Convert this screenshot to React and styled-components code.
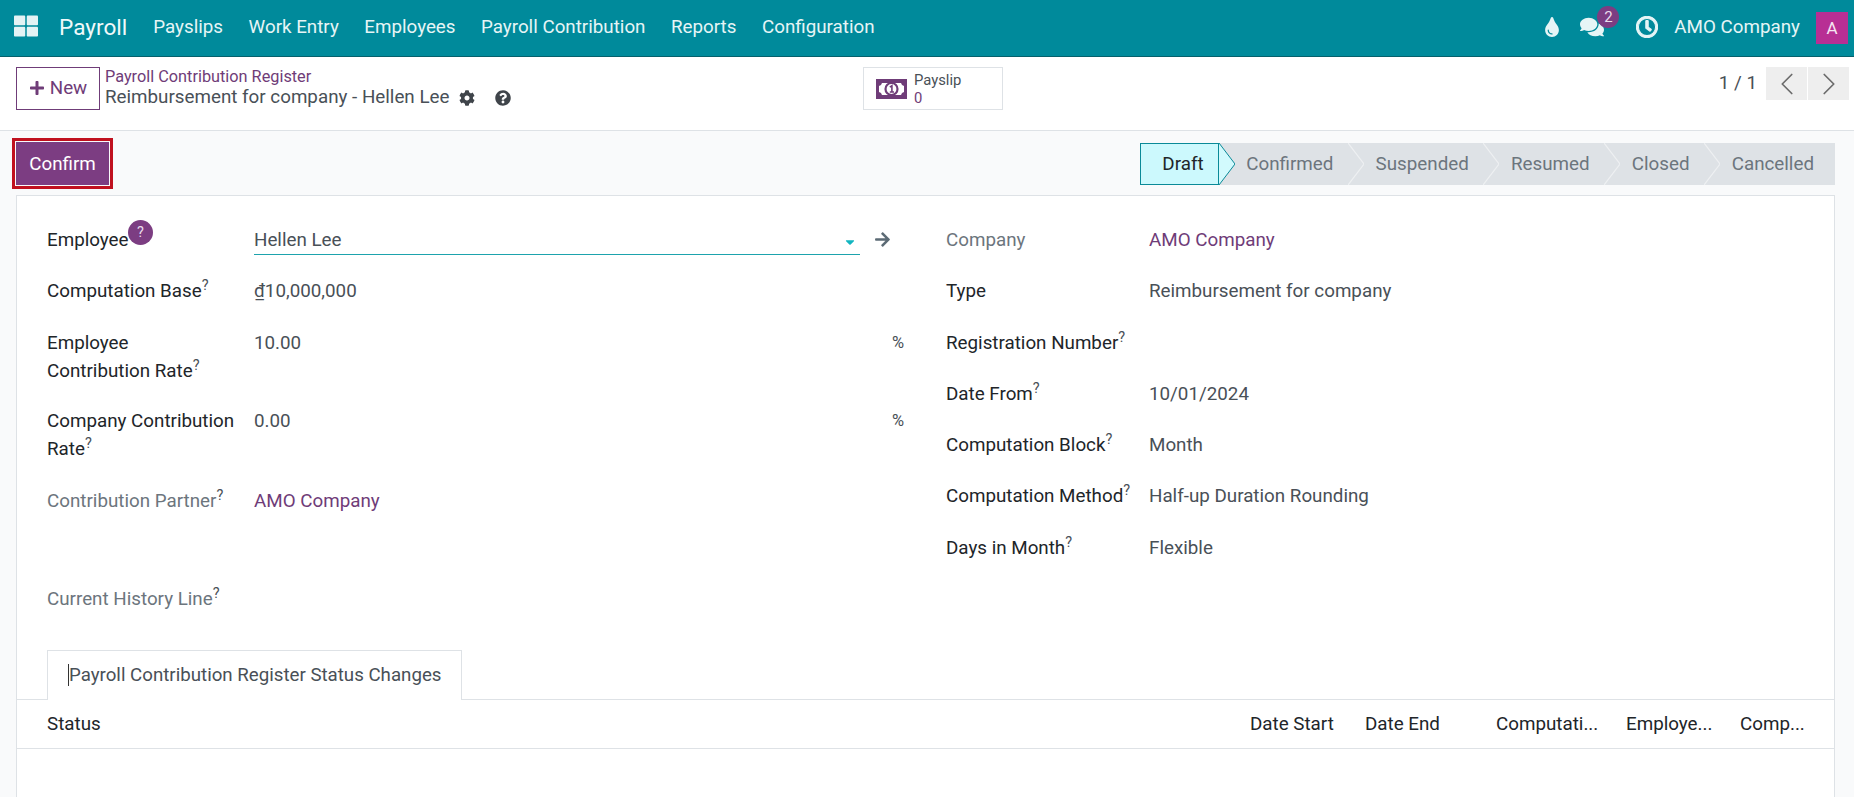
import React from "react";
import styled, { createGlobalStyle } from "styled-components";
import { FaThLarge, FaPlus, FaCog, FaQuestionCircle, FaTint, FaComments, FaRegClock, FaArrowRight, FaCaretDown } from "react-icons/fa";
import { LuChevronLeft, LuChevronRight } from "react-icons/lu";

const Global = createGlobalStyle`
  html, body { margin: 0; padding: 0; height: 100%; overflow: hidden; }
  body { font-family: Roboto, "Liberation Sans", sans-serif; font-size: 18.8px; color: #212529; background: #f9fafb; }
  * { box-sizing: border-box; }
`;
const purple = "#6f3c78";
const NavBar = styled.header`
  height: 57px; background: #008a9b; border-bottom: 1px solid #05606c; color: #e6f5f6;
  display: flex; align-items: center; padding: 0 6px 2px 14px;
`;
const AppIcon = styled.span`display: flex; font-size: 24px; margin-right: 21px; margin-top: -2px; color: #e4f3f5;`;
const Brand = styled.span`font-size: 22.6px; margin-right: 26px; color: #f0f9fa;`;
const NavLink = styled.span`margin-right: 25.5px; white-space: nowrap;`;
const NavSpacer = styled.div`flex: 1;`;
const NavIcon = styled.span`
  display: flex; position: relative; font-size: ${p => p.$size || 20}px; margin-right: ${p => p.$mr || 0}px;
`;
const Badge = styled.span`
  position: absolute; left: 17px; top: -9px; width: 22px; height: 22px; border-radius: 50%;
  background: #7c3d82; color: #e9dcec; font-size: 15px; display: flex; align-items: center; justify-content: center;
`;
const Avatar = styled.span`
  width: 32px; height: 32px; background: #b82f94; color: #f6e6f2; margin-left: 16px; margin-top: 2px;
  display: flex; align-items: center; justify-content: center; font-size: 17px;
`;
const ControlPanel = styled.div`
  height: 74px; background: #fff; border-bottom: 1px solid #dee2e6;
  display: grid; grid-template-columns: 847px 1fr auto; padding: 10px 5px 0 16px;
`;
const CpLeft = styled.div`display: flex; gap: 5px;`;
const NewButton = styled.button`
  height: 43px; width: 84px; border: 1px solid ${purple}; background: #fff; color: ${purple}; font: inherit;
  display: flex; align-items: center; justify-content: center; gap: 5px; padding: 0 0 2px;
`;
const Crumbs = styled.div`display: flex; flex-direction: column;`;
const CrumbLink = styled.span`color: ${purple}; font-size: 16.3px; line-height: 20px;`;
const CrumbTitle = styled.span`
  display: flex; align-items: center; color: #495057; font-size: 18.8px; line-height: 23px; margin-top: -1px;
`;
const TitleIcon = styled.span`display: flex; font-size: 16px; color: #3f444a; margin-left: ${p => p.$ml}px;`;
const StatButton = styled.div`
  width: 140px; height: 43px; border: 1px solid #dee2e6; background: #fff;
  display: flex; padding: 0 0 0 12px; gap: 7px; align-items: center;
`;
const MoneyIcon = styled.svg`width: 31px; height: 20px; flex: none;`;
const StatText = styled.div`display: flex; flex-direction: column; font-size: 14.8px; line-height: 18px; color: #495057;`;
const StatValue = styled.span`color: ${purple};`;
const Pager = styled.div`display: flex; align-items: flex-start; color: #495057;`;
const PagerText = styled.span`margin-right: 9px; line-height: 32px;`;
const PagerButton = styled.span`
  width: 41px; height: 33px; background: #eeeeee; color: #6c6c6c; margin-left: ${p => p.$ml || 0}px;
  display: flex; align-items: center; justify-content: center; font-size: 38px;
`;
const StatusRow = styled.div`
  height: 64px; display: flex; justify-content: space-between; align-items: flex-start; padding: 11px 19px 0 16px;
`;
const ConfirmButton = styled.button`
  width: 93px; height: 43px; background: #7c3d82; color: #fff; border: 0; font: inherit; padding: 0;
  outline: 3px solid #c0111f; outline-offset: 1px;
`;
const Steps = styled.div`display: flex; height: 42px; margin-top: 1px;`;
const Step = styled.div`
  position: relative; display: flex; align-items: center; white-space: nowrap;
  padding: ${p => p.$first ? "0 14px 0 21px" : p.$last ? "0 21px 0 27.7px" : "0 14.5px 0 27.7px"};
  background: ${p => p.$active ? "#ccf9fd" : "#dee2e6"};
  color: ${p => p.$active ? "#212529" : "#6c757d"};
  border: ${p => p.$active ? "1px solid #0a8a98" : "0"};
`;
const Chevron = styled.svg`position: absolute; left: 100%; top: ${p => p.$active ? "-1px" : 0}; width: 16px; height: 42px; z-index: 2; ${p => p.$active ? "margin-left: 1px;" : ""}`;
const Sheet = styled.main`
  margin: 0 19px 0 16px; height: 602px; background: #fff; border: 1px solid #dee2e6; border-bottom: 0; padding-top: 30px;
`;
const Columns = styled.div`display: grid; grid-template-columns: 899px 1fr; height: 424px;`;
const FormColumn = styled.div`display: flex; flex-direction: column; padding-left: ${p => p.$pl}px;`;
const Row = styled.div`
  display: grid; grid-template-columns: ${p => p.$labelw}px ${p => p.$valw ? p.$valw + "px auto" : "1fr"}; line-height: 28px; margin-bottom: ${p => p.$mb ?? 23.3}px;
`;
const Label = styled.div`color: ${p => p.$muted ? "#6c757d" : "#212529"}; position: relative;`;
const Sup = styled.sup`font-size: 14.5px; line-height: 0; color: #495057; vertical-align: 7px;`;
const HelpDot = styled.span`
  position: absolute; top: -6px; left: 81px; width: 25px; height: 25px; border-radius: 50%;
  background: #7c3d82; color: #e9dcec; font-size: 14.5px; line-height: 25px; text-align: center;
`;
const Value = styled.div`color: ${p => p.$link ? purple : "#495057"};`;
const ComboWrap = styled.div`display: flex; align-items: flex-start;`;
const Combo = styled.div`
  width: 606px; height: 29px; border-bottom: 1px solid #1da3ad; position: relative; color: #495057;
`;
const Caret = styled.span`position: absolute; right: 3px; top: 9px; display: flex; color: #12b5c0; font-size: 14px;`;
const GoArrow = styled.span`display: flex; margin: 5px 0 0 14px; color: #5c6b75; font-size: 17px;`;
const Unit = styled.div`color: #495057; padding-left: 0; font-size: 16.5px;`;
const Tabs = styled.div`
  height: 50px; border-bottom: 1px solid #dee2e6; padding-left: 30px; display: flex;
`;
const Tab = styled.div`
  height: 50px; width: 415px; border: 1px solid #dee2e6; border-bottom: 0; background: #fff; color: #495057; font-size: 18.7px;
  padding: 0 0 2px 20px; display: flex; align-items: center; position: relative;
`;
const TextCursor = styled.span`width: 1px; height: 22px; background: #333; margin-right: 0;`;
const TableHead = styled.div`
  height: 49px; border-bottom: 1px solid #dee2e6; display: grid; align-items: center; padding-left: 30px;
  grid-template-columns: 1203px 115px 131px 130px 114px auto;
`;
const HeadCell = styled.span`white-space: nowrap;`;

const Chev = ({ active }) => (
  <Chevron viewBox="0 0 16 42" $active={active} preserveAspectRatio="none">
    {active
      ? <path d="M0 0 L16 21 L0 42" fill="#d2fafd" stroke="#0a8a98" strokeWidth="1" />
      : <><path d="M0 0 L16 21 L0 42Z" fill="#dee2e6" /><path d="M0 0 L16 21 L0 42" fill="none" stroke="#eef0f2" strokeWidth="1.2" /></>}
  </Chevron>
);
const Help = () => <Sup>?</Sup>;
const Money = () => (
  <MoneyIcon viewBox="0 0 31 20">
    <rect width="31" height="20" fill={purple} />
    <path d="M6 4 H25 Q25.5 6.5 28 7 V13 Q25.5 13.5 25 16 H6 Q5.5 13.5 3 13 V7 Q5.5 6.5 6 4Z" fill="#fff" />
    <circle cx="15.5" cy="10" r="6" fill="#fff" stroke={purple} strokeWidth="2.2" />
    <path d="M13.8 8.2 L15.9 6.8 V13 M13.8 13 H18" fill="none" stroke={purple} strokeWidth="1.6" />
  </MoneyIcon>
);

const navItems = ["Payslips", "Work Entry", "Employees", "Payroll Contribution", "Reports", "Configuration"];
const steps = ["Draft", "Confirmed", "Suspended", "Resumed", "Closed", "Cancelled"];

export default function App() {
  return (
    <>
      <Global />
      <NavBar>
        <AppIcon><FaThLarge /></AppIcon>
        <Brand>Payroll</Brand>
        {navItems.map(n => <NavLink key={n}>{n}</NavLink>)}
        <NavSpacer />
        <NavIcon $size={20} $mr={18}><FaTint /></NavIcon>
        <NavIcon $size={24} $mr={32}><FaComments /><Badge>2</Badge></NavIcon>
        <NavIcon $size={22} $mr={16}><FaRegClock stroke="currentColor" strokeWidth={24} /></NavIcon>
        <span>AMO Company</span>
        <Avatar>A</Avatar>
      </NavBar>
      <ControlPanel>
        <CpLeft>
          <NewButton><FaPlus size={16} />New</NewButton>
          <Crumbs>
            <CrumbLink>Payroll Contribution Register</CrumbLink>
            <CrumbTitle>
              Reimbursement for company - Hellen Lee
              <TitleIcon $ml={10}><FaCog /></TitleIcon>
              <TitleIcon $ml={20}><FaQuestionCircle /></TitleIcon>
            </CrumbTitle>
          </Crumbs>
        </CpLeft>
        <StatButton>
          <Money />
          <StatText>Payslip<StatValue>0</StatValue></StatText>
        </StatButton>
        <Pager>
          <PagerText>1 / 1</PagerText>
          <PagerButton><LuChevronLeft strokeWidth={1.1} /></PagerButton>
          <PagerButton $ml={1}><LuChevronRight strokeWidth={1.1} /></PagerButton>
        </Pager>
      </ControlPanel>
      <StatusRow>
        <ConfirmButton>Confirm</ConfirmButton>
        <Steps>
          {steps.map((s, i) => (
            <Step key={s} $first={i === 0} $last={i === steps.length - 1} $active={i === 0}>
              {s}
              {i < steps.length - 1 && <Chev active={i === 0} />}
            </Step>
          ))}
        </Steps>
      </StatusRow>
      <Sheet>
        <Columns>
          <FormColumn $pl={30}>
            <Row $labelw={207} $mb={22}>
              <Label>Employee<HelpDot>?</HelpDot></Label>
              <ComboWrap>
                <Combo>Hellen Lee<Caret><FaCaretDown /></Caret></Combo>
                <GoArrow><FaArrowRight /></GoArrow>
              </ComboWrap>
            </Row>
            <Row $labelw={207} $mb={24.3}><Label>Computation Base<Help /></Label><Value>₫10,000,000</Value></Row>
            <Row $labelw={207} $valw={638} $mb={22}><Label>Employee<br />Contribution Rate<Help /></Label><Value>10.00</Value><Unit>%</Unit></Row>
            <Row $labelw={207} $valw={638} $mb={24}><Label>Company Contribution<br />Rate<Help /></Label><Value>0.00</Value><Unit>%</Unit></Row>
            <Row $labelw={207} $mb={70}><Label $muted>Contribution Partner<Help /></Label><Value $link>AMO Company</Value></Row>
            <Row $labelw={207} $mb={0}><Label $muted>Current History Line<Help /></Label><Value /></Row>
          </FormColumn>
          <FormColumn $pl={30}>
            <Row $labelw={203}><Label $muted>Company</Label><Value $link>AMO Company</Value></Row>
            <Row $labelw={203}><Label>Type</Label><Value>Reimbursement for company</Value></Row>
            <Row $labelw={203}><Label>Registration Number<Help /></Label><Value /></Row>
            <Row $labelw={203}><Label>Date From<Help /></Label><Value>10/01/2024</Value></Row>
            <Row $labelw={203}><Label>Computation Block<Help /></Label><Value>Month</Value></Row>
            <Row $labelw={203}><Label>Computation Method<Help /></Label><Value>Half-up Duration Rounding</Value></Row>
            <Row $labelw={203}><Label>Days in Month<Help /></Label><Value>Flexible</Value></Row>
          </FormColumn>
        </Columns>
        <Tabs><Tab><TextCursor />Payroll Contribution Register Status Changes</Tab></Tabs>
        <TableHead>
          <HeadCell>Status</HeadCell>
          <HeadCell>Date Start</HeadCell>
          <HeadCell>Date End</HeadCell>
          <HeadCell>Computati...</HeadCell>
          <HeadCell>Employe...</HeadCell>
          <HeadCell>Comp...</HeadCell>
        </TableHead>
      </Sheet>
    </>
  );
}
